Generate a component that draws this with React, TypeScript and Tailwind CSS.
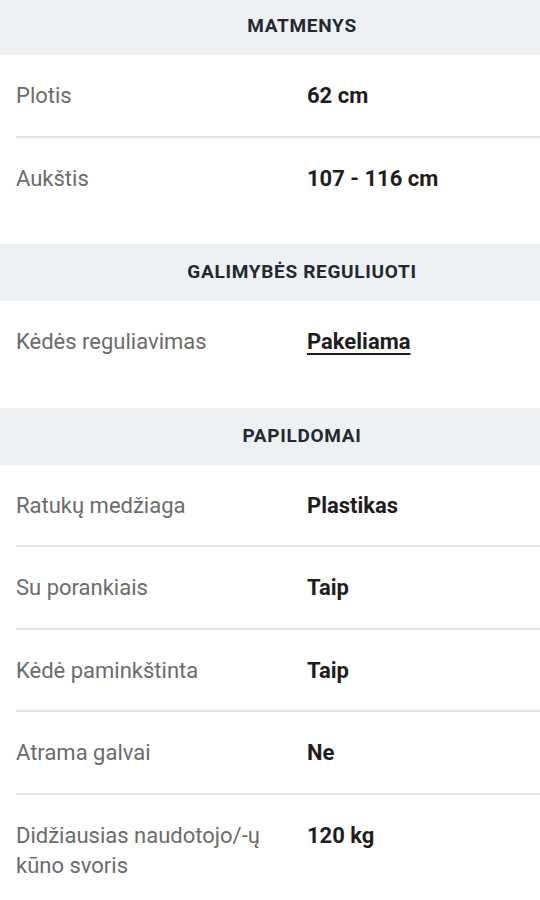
import React from "react";

type Row = { label: string; value: string; link?: boolean };
type Section = { title: string; rows: Row[] };

const sections: Section[] = [
  {
    title: "MATMENYS",
    rows: [
      { label: "Plotis", value: "62 cm" },
      { label: "Aukštis", value: "107 - 116 cm" },
    ],
  },
  {
    title: "GALIMYBĖS REGULIUOTI",
    rows: [{ label: "Kėdės reguliavimas", value: "Pakeliama", link: true }],
  },
  {
    title: "PAPILDOMAI",
    rows: [
      { label: "Ratukų medžiaga", value: "Plastikas" },
      { label: "Su porankiais", value: "Taip" },
      { label: "Kėdė paminkštinta", value: "Taip" },
      { label: "Atrama galvai", value: "Ne" },
      { label: "Didžiausias naudotojo/-ų kūno svoris", value: "120 kg" },
    ],
  },
];

export default function App() {
  return (
    <div
      className="w-[540px] h-[900px] overflow-hidden bg-white"
      style={{ fontFamily: "Roboto, 'Noto Sans', sans-serif" }}
    >
      <div className="-mt-[2px]">
        {sections.map((s, si) => (
          <div key={si} className="mb-[24px]">
            <div className="h-[57px] bg-[#eef1f4] flex items-center justify-center pl-[64px] text-[19px] font-bold tracking-[0.7px] text-[#25282d]">
              {s.title}
            </div>
            <div className="pl-[16px]">
              {s.rows.map((r, ri) => (
                <div
                  key={ri}
                  className={`grid grid-cols-[291px_1fr] pt-[26px] pb-[24.5px] text-[22px] leading-[30px] border-b-2 ${
                    ri < s.rows.length - 1 ? "border-[#e4e4e4]" : "border-transparent"
                  }`}
                >
                  <div className="text-[#6b6b6b] pr-[16px]">{r.label}</div>
                  <div
                    className={`font-bold text-[#1e1e1e] ${
                      r.link ? "underline underline-offset-[4px] decoration-2" : ""
                    }`}
                  >
                    {r.value}
                  </div>
                </div>
              ))}
            </div>
          </div>
        ))}
      </div>
    </div>
  );
}
